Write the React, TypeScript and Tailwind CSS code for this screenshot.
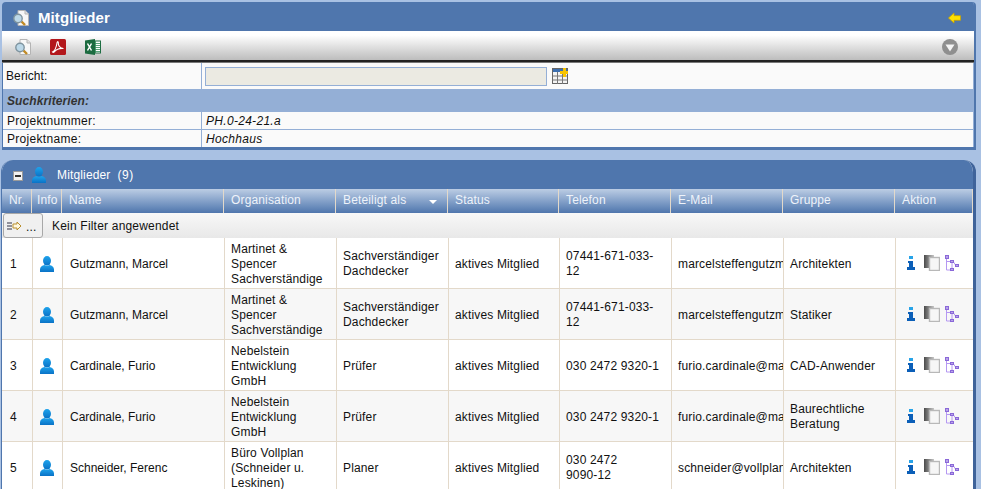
const headCols = 'grid-cols-[30px_30px_162px_112px_112px_111px_112px_112px_112px_1fr]';
const rowCols = 'grid-cols-[31px_30px_162px_112px_112px_111px_112px_112px_112px_1fr]';

const heads = ['Nr.', 'Info', 'Name', 'Organisation', 'Beteiligt als', 'Status', 'Telefon', 'E-Mail', 'Gruppe', 'Aktion'];

const members = [
  { nr: 1, name: 'Gutzmann, Marcel', org: ['Martinet &', 'Spencer', 'Sachverständige'], role: ['Sachverständiger', 'Dachdecker'], tel: ['07441-671-033-', '12'], mail: 'marcelsteffengutzmann@martinet.de', group: ['Architekten'] },
  { nr: 2, name: 'Gutzmann, Marcel', org: ['Martinet &', 'Spencer', 'Sachverständige'], role: ['Sachverständiger', 'Dachdecker'], tel: ['07441-671-033-', '12'], mail: 'marcelsteffengutzmann@martinet.de', group: ['Statiker'] },
  { nr: 3, name: 'Cardinale, Furio', org: ['Nebelstein', 'Entwicklung', 'GmbH'], role: ['Prüfer'], tel: ['030 2472 9320-1'], mail: 'furio.cardinale@mail.de', group: ['CAD-Anwender'] },
  { nr: 4, name: 'Cardinale, Furio', org: ['Nebelstein', 'Entwicklung', 'GmbH'], role: ['Prüfer'], tel: ['030 2472 9320-1'], mail: 'furio.cardinale@mail.de', group: ['Baurechtliche', 'Beratung'] },
  { nr: 5, name: 'Schneider, Ferenc', org: ['Büro Vollplan', '(Schneider u.', 'Leskinen)'], role: ['Planer'], tel: ['030 2472', '9090-12'], mail: 'schneider@vollplan.de', group: ['Architekten'] },
];

function PersonIcon({ className }: { className: string }) {
  return (
    <svg viewBox="0 0 14 16" className={className}>
      <defs>
        <linearGradient id="person" x1="0" y1="0" x2="0" y2="1">
          <stop offset="0" stopColor="#1ea3ec" />
          <stop offset="1" stopColor="#0a72c6" />
        </linearGradient>
      </defs>
      <ellipse cx="7" cy="4.800" rx="4" ry="4.800" fill="url(#person)" />
      <path d="M0 16v-2.500C0 11 2 9.500 4.500 9 6 10 8 10 9.500 9 12 9.500 14 11 14 13.500V16z" fill="url(#person)" />
    </svg>
  );
}

function ReportIcon() {
  return (
    <svg viewBox="0 0 16 16" className="h-4 w-4">
      <path d="M5 .5h7l3.500 3.500v11.500H5z" fill="#f7f7f7" stroke="#b4b4b4" />
      <path d="M12 .5V4h3.500" fill="#e2e2e2" stroke="#b4b4b4" />
      <path d="M8.500 11.500 12 15" stroke="#c08a24" strokeWidth="2.400" />
      <circle cx="5" cy="8.500" r="4.200" fill="#bcd8e8" stroke="#7f949f" strokeWidth="1.400" />
    </svg>
  );
}

function PdfIcon() {
  return (
    <svg viewBox="0 0 16 16" className="h-4 w-4">
      <rect width="16" height="16" rx="1.500" fill="#b3171b" />
      <path d="M2.500 13c1.800-.8 3.800-4.500 4.600-9.500.2-1.300 1.400-1 1.200.4-.3 2.600 1.700 5.300 5.200 5.600-3 -.3-7 .8-9.200 3.300-.7.8-1.500.6-1.800.2z" fill="none" stroke="#fff" strokeWidth="1.100" />
    </svg>
  );
}

function ExcelIcon() {
  return (
    <svg viewBox="0 0 16 16" className="h-4 w-4">
      <rect x="7" y="2" width="8.500" height="12" fill="#fff" stroke="#1f6e43" />
      <path d="M10.500 2v12M8 4.500h7M8 6.500h7M8 8.500h7M8 10.500h7M8 12.500h7" stroke="#2f8a57" strokeWidth=".8" />
      <path d="M0 1.500 10 0v16L0 14.500z" fill="#1c6b40" />
      <path d="M2.500 4.500 6.500 11.500M6.500 4.500 2.500 11.500" stroke="#fff" strokeWidth="1.500" />
    </svg>
  );
}

function RowActions() {
  return (
    <div className="flex items-center pl-[11px]">
      <svg viewBox="0 0 8 14" className="h-[14px] w-2">
        <rect x="2" y="0" width="4" height="3" fill="#27a3e8" />
        <path d="M1 5h5v6h2v3H0v-3h2V7H1z" fill="#0b5fb8" />
      </svg>
      <svg viewBox="0 0 16 16" className="ml-[9px] h-4 w-4">
        <defs>
          <linearGradient id="copyback" x1="0" y1="0" x2="1" y2="0">
            <stop offset="0" stopColor="#4a4a4a" />
            <stop offset="1" stopColor="#c8c8c8" />
          </linearGradient>
        </defs>
        <rect x="0" y="0" width="10" height="13" fill="url(#copyback)" />
        <rect x="5.500" y="2.500" width="10" height="13" fill="#f6f6f6" stroke="#b8b8b8" strokeWidth="1.400" />
      </svg>
      <svg viewBox="0 0 14 17" className="ml-[5px] h-[17px] w-[14px]">
        <path d="M1.500 4v11H5M1.500 6.500H5M8.500 7l2 3M7 8v5" fill="none" stroke="#b598f2" strokeWidth="1" />
        <rect x=".5" y=".5" width="3" height="3" fill="#b9a4e8" stroke="#8a68d8" />
        <rect x="5.500" y="5.500" width="3" height="2" fill="#b9a4e8" stroke="#8a68d8" />
        <rect x="10.500" y="9.500" width="3" height="2" fill="#b9a4e8" stroke="#8a68d8" />
        <rect x="5.500" y="13.500" width="3" height="2" fill="#b9a4e8" stroke="#8a68d8" />
      </svg>
    </div>
  );
}

function Cell({ lines, className = 'pl-[6px]' }: { lines: string[]; className?: string }) {
  return (
    <div className={`flex flex-col justify-center overflow-hidden whitespace-nowrap border-r border-[#e3d9ca] pt-[2px] leading-[15px] ${className}`}>
      {lines.map((l) => (
        <span key={l}>{l}</span>
      ))}
    </div>
  );
}

export default function App() {
  return (
    <div className="h-[489px] w-[981px] overflow-hidden bg-[#a9c1e3] text-[12px] tracking-[0.15px] text-[#111]" style={{ fontFamily: '"Liberation Sans", Arial, sans-serif' }}>
      <div className="pt-[2px] pl-[2px] pr-[5px]">
        <div className="overflow-hidden rounded-t-[4px] border-b-[3px] border-r-2 border-[#4f76ad]">
          <div className="flex h-[29px] items-center justify-between bg-[#4f76ad] pl-[11px] pr-[13px]">
            <div className="flex items-center gap-[9px] pt-[3px]">
              <ReportIcon />
              <span className="text-[15px] font-bold tracking-[0.1px] text-white">Mitglieder</span>
            </div>
            <svg viewBox="0 0 14 12" className="mt-[2px] h-3 w-[13px]">
              <path d="M0.500 6 6.500.5v3h7v5h-7v3z" fill="#ffe000" stroke="#c9a200" strokeWidth=".8" />
            </svg>
          </div>
          <div className="flex h-[29px] items-center justify-between bg-gradient-to-b from-white from-15% to-[#bdbdbd] pl-[13px] pr-[16px] pt-[2px]">
            <div className="flex items-center gap-[19px]">
              <ReportIcon />
              <PdfIcon />
              <ExcelIcon />
            </div>
            <svg viewBox="0 0 16 16" className="h-4 w-4">
              <circle cx="8" cy="8" r="8" fill="#8f8f8f" />
              <path d="M3.500 5.500h9L8 12.500z" fill="#f4f4f4" />
            </svg>
          </div>
          <div className="h-[2px] bg-[#222]" />
          <div className="h-[1px] bg-[#777]" />
          <div className="border-x border-l-[#4f76ad] border-r-[#94afd6] bg-[#fafafa] tracking-[0.3px]">
            <div className="flex h-[26px] items-center">
              <div className="flex h-full w-[199px] items-center border-r border-[#94afd6] pl-[3px] tracking-[0.1px]">Bericht:</div>
              <div className="flex items-center gap-[5px] pl-[3px]">
                <div className="h-[19px] w-[342px] border border-[#94afd6] bg-[#ebeae2]" />
                <svg viewBox="0 0 16 16" className="h-4 w-4">
                  <rect x=".5" y=".5" width="15" height="15" fill="#f4f4f4" stroke="#666" />
                  <rect x="1" y="1" width="14" height="3" fill="#3c6fb0" />
                  <path d="M.5 8h15M.5 12h15M5.500 4v12M10.500 4v12" stroke="#777" />
                  <path d="M8 3h3V0h3v3h2v3h-2v3h-3V6H8z" fill="#f8c400" />
                </svg>
              </div>
            </div>
            <div className="flex h-[23px] items-center bg-[#94afd6] pl-[4px] font-bold italic tracking-[0.1px] text-[#333]">Suchkriterien:</div>
            <div className="flex h-[18px] items-center border-b border-[#94afd6]">
              <div className="flex h-full w-[199px] items-center border-r border-[#94afd6] pl-[4px]">Projektnummer:</div>
              <div className="pl-[4px] italic">PH.0-24-21.a</div>
            </div>
            <div className="flex h-[17px] items-center">
              <div className="flex h-full w-[199px] items-center border-r border-[#94afd6] pl-[4px]">Projektname:</div>
              <div className="pl-[4px] italic">Hochhaus</div>
            </div>
          </div>
        </div>
      </div>

      <div className="mt-[10px] ml-[1px] mr-[5px] overflow-hidden rounded-t-[12px] border-r-[3px] border-l border-r-[#3f639a] border-l-[#4f76ad] bg-white">
        <div className="flex h-[29px] items-center bg-[#4f76ad] pl-[11px] text-white">
          <div className="mt-[2px] flex h-[10px] w-[10px] items-center justify-center border border-[#9a9a9a] bg-[#f2f2f2]">
            <div className="h-[2px] w-[6px] bg-[#333]" />
          </div>
          <PersonIcon className="ml-[9px] h-4 w-[14px]" />
          <span className="ml-[11px]">Mitglieder</span>
          <span className="ml-[7px] tracking-[0.5px]">(9)</span>
        </div>
        <div className={`grid h-[24px] ${headCols} bg-gradient-to-b from-[#bccde4] to-[#4f76ad] pb-[2px] text-[#eef3fa]`}>
          {heads.map((h) => (
            <div key={h} className={`relative -mb-[2px] flex items-center border-r border-[#e3d9ca] pb-[2px] ${h === 'Info' ? 'pl-[5px]' : 'pl-[7px]'}`}>
              {h}
              {h === 'Beteiligt als' && (
                <svg viewBox="0 0 8 4" className="absolute right-[10px] top-[11px] h-1 w-2">
                  <path d="M0 0h8L4 4z" fill="#fff" />
                </svg>
              )}
            </div>
          ))}
        </div>
        <div className="flex h-[25px] items-center bg-gradient-to-b from-[#f8f8f8] to-[#e8e8e8] pl-[1px]">
          <div className="flex h-[25px] w-[40px] items-center gap-[4px] rounded-[3px] border border-[#a8a8a8] bg-[#f0f0f0] pl-[3px]">
            <svg viewBox="0 0 15 10" className="h-[10px] w-[15px]">
              <path d="M0 2h5M0 5h5M0 8h5" stroke="#334" />
              <path d="M6 3h4V1l4 4-4 4V7H6z" fill="#fff8e0" stroke="#b98f2e" />
            </svg>
            <span className="pt-[3px] leading-none">...</span>
          </div>
          <span className="ml-[9px] tracking-[0.2px]">Kein Filter angewendet</span>
        </div>
        {members.map((m, i) => (
          <div key={m.nr} className={`grid h-[51px] ${rowCols} border-b border-[#e3d9ca] ${i % 2 === 1 ? 'bg-[#f7f7f7]' : 'bg-white'}`}>
            <Cell lines={[String(m.nr)]} className="pl-[8px]" />
            <div className="flex items-center justify-center border-r border-[#e3d9ca] pt-[2px] pr-[2px]">
              <PersonIcon className="h-4 w-[14px]" />
            </div>
            <Cell lines={[m.name]} className="pl-[7px] tracking-normal" />
            <Cell lines={m.org} />
            <Cell lines={m.role} />
            <Cell lines={['aktives Mitglied']} />
            <Cell lines={m.tel} />
            <Cell lines={[m.mail]} />
            <Cell lines={m.group} />
            <RowActions />
          </div>
        ))}
      </div>
    </div>
  );
}
